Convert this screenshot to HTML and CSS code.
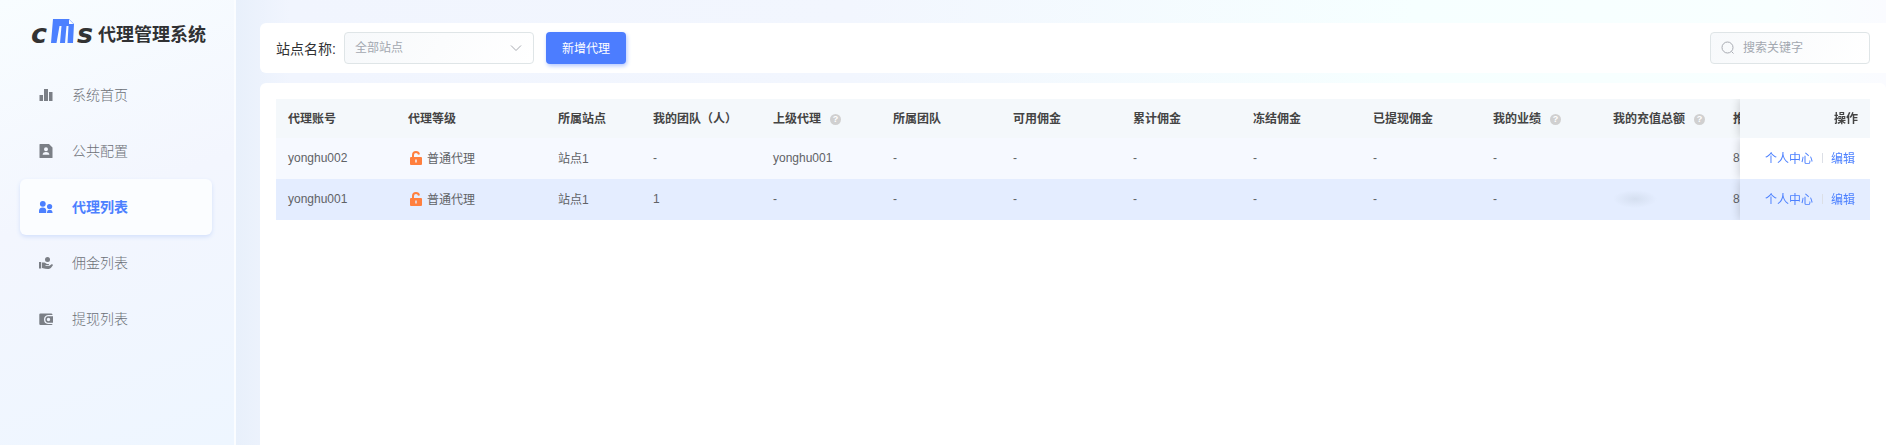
FILE: index.html
```
<!DOCTYPE html>
<html lang="zh-CN">
<head>
  <meta charset="UTF-8">
  <meta name="viewport" content="width=device-width, initial-scale=1.0">
  <title>代理管理系统</title>
  <link rel="stylesheet" href="styles.css">
</head>
<body>
  <aside class="sidebar">
    <div class="brand">
      <svg class="logo" width="66" height="40" viewBox="0 -10 66 40">
        <text x="1" y="25">c</text>
        <text x="47" y="25">s</text>
        <path fill="#4c80ff" d="M23 1H39L44 6L43 25H37.500L38.500 8H36.500L35 25H30L31.500 8H29.500L26.500 25H21Z"/>
        <path fill="#fff" d="M39 1.500V6H43.500Z"/>
      </svg>
      <h1>代理管理系统</h1>
    </div>
    <nav>
      <a href="#home">
        <svg width="14" height="14" viewBox="0 0 14 14"><path d="M.5 7H4V13H.5ZM5 1H9V13H5ZM10 4H13.500V13H10Z"/></svg>
        系统首页
      </a>
      <a href="#config">
        <svg width="14" height="14" viewBox="0 0 14 14"><path fill-rule="evenodd" d="M1 0H10L13.500 3.500V13.500Q13.500 14 13 14H1Q0.500 14 0.500 13.500V.5Q.5 0 1 0ZM7 3.200A2 2 0 0 0 7 7.200A2 2 0 0 0 7 3.200ZM3.700 10.800H10.300V10Q10 8 7 8Q4 8 3.700 10Z"/></svg>
        公共配置
      </a>
      <a href="#agents" class="active">
        <svg width="14" height="14" viewBox="0 0 14 14"><circle cx="3.800" cy="3.800" r="2.900"/><path d="M0 13V10.500Q.3 7.500 3.800 7.500Q7 7.500 7.200 10.500V13Z"/><circle cx="10.600" cy="6.500" r="2.600"/><path d="M8 13V12Q8.200 9.700 10.600 9.700Q13.200 9.700 13.500 12V13Z"/></svg>
        代理列表
      </a>
      <a href="#commission">
        <svg width="14" height="14" viewBox="0 0 14 14"><circle cx="8.500" cy="3.600" r="2.500"/><path d="M0 6H2.200V12.500H0ZM3 6.500H5.500L8 8H9.500Q10.300 8.300 10 9H6.500V9.800H10.500L12.500 8.300Q14 8 13.900 9.200Q12.500 12 10 12.900Q8 13.500 3 12Z"/></svg>
        佣金列表
      </a>
      <a href="#withdraw">
        <svg width="14" height="14" viewBox="0 0 14 14"><path fill-rule="evenodd" d="M1.500 1.500H12.500Q13.500 1.500 13.500 3H9Q5 3.500 5 7.500Q5 11.500 9 12H13.500Q13.500 13 12.500 13H1.500Q.3 13 .3 12V2.500Q.3 1.500 1.500 1.500ZM9 4.200H14V10.800H9Q6.300 10.500 6.300 7.500Q6.300 4.500 9 4.200ZM9.500 5.800A1.700 1.700 0 0 0 9.500 9.200A1.700 1.700 0 0 0 9.500 5.800Z"/></svg>
        提现列表
      </a>
    </nav>
  </aside>

  <main>
    <form class="toolbar">
      <label for="site">站点名称:</label>
      <div class="select">
        <select id="site">
          <option>全部站点</option>
          <option>站点1</option>
        </select>
        <svg width="12" height="12" viewBox="0 0 12 12"><path d="M1 3.500L6 8.500L11 3.500"/></svg>
      </div>
      <button type="button">新增代理</button>
      <label class="search">
        <svg width="14" height="14" viewBox="0 0 14 14"><circle cx="6.500" cy="6.500" r="5.500"/><path d="M10.500 10.500L12.500 12.500"/></svg>
        <input type="text" placeholder="搜索关键字" aria-label="搜索关键字">
      </label>
    </form>

    <section class="card">
      <div class="table-wrap">
        <table>
          <colgroup>
            <col class="w120"><col class="w150"><col class="w95">
            <col class="w120" span="9"><col class="w120"><col class="w130">
          </colgroup>
          <thead>
            <tr>
              <th>代理账号</th>
              <th>代理等级</th>
              <th>所属站点</th>
              <th>我的团队（人）</th>
              <th>上级代理<span class="help">?</span></th>
              <th>所属团队</th>
              <th>可用佣金</th>
              <th>累计佣金</th>
              <th>冻结佣金</th>
              <th>已提现佣金</th>
              <th>我的业绩<span class="help">?</span></th>
              <th>我的充值总额<span class="help">?</span></th>
              <th>推广</th>
              <th class="fixed">操作</th>
            </tr>
          </thead>
          <tbody>
            <tr>
              <td>yonghu002</td>
              <td>
                <span class="level">
                  <svg width="12" height="14" viewBox="0 0 12 14"><path class="shackle" d="M3 7V4Q3 1 6 1Q8.500 1 9 3.500"/><path fill-rule="evenodd" d="M1 6H11Q12 6 12 7V13Q12 14 11 14H1Q0 14 0 13V7Q0 6 1 6ZM5.300 8.500V11.500H6.700V8.500Z"/></svg>
                  普通代理
                </span>
              </td>
              <td>站点1</td>
              <td>-</td>
              <td>yonghu001</td>
              <td>-</td>
              <td>-</td>
              <td>-</td>
              <td>-</td>
              <td>-</td>
              <td>-</td>
              <td></td>
              <td>8</td>
              <td class="fixed"><div class="actions"><a href="#user">个人中心</a><a href="#edit">编辑</a></div></td>
            </tr>
            <tr class="current">
              <td>yonghu001</td>
              <td>
                <span class="level">
                  <svg width="12" height="14" viewBox="0 0 12 14"><path class="shackle" d="M3 7V4Q3 1 6 1Q8.500 1 9 3.500"/><path fill-rule="evenodd" d="M1 6H11Q12 6 12 7V13Q12 14 11 14H1Q0 14 0 13V7Q0 6 1 6ZM5.300 8.500V11.500H6.700V8.500Z"/></svg>
                  普通代理
                </span>
              </td>
              <td>站点1</td>
              <td>1</td>
              <td>-</td>
              <td>-</td>
              <td>-</td>
              <td>-</td>
              <td>-</td>
              <td>-</td>
              <td>-</td>
              <td><div class="masked"></div></td>
              <td>8</td>
              <td class="fixed"><div class="actions"><a href="#user">个人中心</a><a href="#edit">编辑</a></div></td>
            </tr>
          </tbody>
        </table>
      </div>
    </section>
  </main>
</body>
</html>
```
FILE: styles.css
```
* {
  margin: 0;
  padding: 0;
  box-sizing: border-box;
}

body {
  display: flex;
  min-height: 100vh;
  font-family: "Liberation Sans", "Noto Sans CJK SC", sans-serif;
  font-size: 12px;
  color: #606266;
  background: linear-gradient(90deg, #e8f0fb 236px, #f1f5fe 290px, #f2f6fe 45%, #f6ffff 75%, #f8ffff 94%, #fafbff);
}

a {
  text-decoration: none;
}

/* sidebar */
.sidebar {
  flex: none;
  width: 236px;
  padding: 0 22px 0 20px;
  border-right: 2px solid #fbfdff;
  background: linear-gradient(160deg, #f8fdff, #f3f6fe 45%, #eef6ff);
}

.brand {
  display: flex;
  align-items: center;
  gap: 2px;
  height: 67px;
  padding: 2px 0 0 10px;
}

.logo {
  overflow: visible;
  margin-bottom: 14px;
}

.logo text {
  font-family: "DejaVu Sans", sans-serif;
  font-size: 27px;
  font-style: italic;
  font-weight: 700;
  fill: #333;
}

.brand h1 {
  font-size: 18px;
  line-height: 24px;
  color: #303133;
  white-space: nowrap;
}

nav a {
  display: flex;
  align-items: center;
  gap: 19px;
  height: 56px;
  padding: 0 0 2px 19px;
  border-radius: 6px;
  font-size: 14px;
  font-weight: 300;
  color: #6c7077;
}

nav svg {
  margin-top: 2px;
  fill: #7b7f86;
}

nav .active {
  background: #fbfdff;
  box-shadow: 0 2px 4px #d3e0fb;
  font-weight: 700;
  color: #4c80ff;
}

nav .active svg {
  fill: #4c80ff;
}

/* toolbar */
main {
  flex: 1;
  display: flex;
  flex-direction: column;
  gap: 10px;
  min-width: 0;
  padding: 23px 0 0 24px;
}

.toolbar {
  display: flex;
  align-items: center;
  height: 50px;
  padding: 0 16px;
  border-radius: 6px 0 0 6px;
  background: #fff;
  font-size: 14px;
  color: #303133;
}

.select {
  position: relative;
  width: 190px;
  margin: 0 12px 0 8px;
}

.select select,
.search {
  width: 100%;
  height: 32px;
  border: 1px solid #dfe5e7;
  border-radius: 4px;
  background: linear-gradient(120deg, #f7f9fb, #fff);
}

.select select {
  display: block;
  padding: 0 10px;
  appearance: none;
  font-family: inherit;
  font-size: 12px;
  color: #a3a8b0;
}

.select svg {
  position: absolute;
  top: 10px;
  right: 12px;
  pointer-events: none;
}

.toolbar svg {
  flex: none;
  fill: none;
  stroke: #a8abb2;
}

.toolbar button {
  width: 80px;
  height: 32px;
  padding-bottom: 2px;
  border: none;
  border-radius: 4px;
  background: #4c7dff;
  box-shadow: 1px 2px 4px #b4c8ff;
  font-family: inherit;
  font-size: 12px;
  color: #fff;
  cursor: pointer;
}

.search {
  display: flex;
  align-items: center;
  gap: 8px;
  width: 160px;
  margin-left: auto;
  padding: 0 10px;
}

.search input {
  width: 100%;
  min-width: 0;
  border: none;
  outline: none;
  background: none;
  font-family: inherit;
  font-size: 12px;
}

.search input::placeholder {
  color: #a3a8b0;
}

/* table */
.card {
  flex: 1;
  padding: 16px;
  border-radius: 6px 6px 0 0;
  background: #fff;
}

.table-wrap {
  overflow-x: auto;
  scrollbar-width: none;
}

table {
  width: 1695px;
  table-layout: fixed;
  border-collapse: separate;
  border-spacing: 0;
}

.w95 {
  width: 95px;
}

.w120 {
  width: 120px;
}

.w130 {
  width: 130px;
}

.w150 {
  width: 150px;
}

th,
td {
  height: 41px;
  padding: 0 12px 2px;
  text-align: left;
  white-space: nowrap;
  background: #f6f9ff;
}

th {
  height: 39px;
  font-weight: 600;
  color: #444;
  background: #f4f8fb;
}

.fixed {
  position: sticky;
  right: 0;
  text-align: right;
  box-shadow: 0 0 10px rgba(0, 0, 0, 0.2);
  clip-path: inset(0 0 0 -10px);
}

td.fixed {
  background: #fff;
}

.current td {
  background: #e4edff;
}

.help {
  display: inline-block;
  width: 11px;
  height: 11px;
  margin-left: 9px;
  border-radius: 50%;
  background: #d0d0d0;
  font-size: 9px;
  font-weight: 700;
  line-height: 11px;
  text-align: center;
  vertical-align: middle;
  color: #fff;
}

.level {
  display: flex;
  align-items: center;
  gap: 5px;
  padding-left: 2px;
}

.level svg {
  fill: #ff7f3e;
}

.level .shackle {
  fill: none;
  stroke: #ff7f3e;
  stroke-width: 2;
}

.masked {
  width: 44px;
  height: 18px;
  background: radial-gradient(closest-side, #d5dff0, #e4edff);
}

.actions {
  display: flex;
  justify-content: flex-end;
  padding-right: 3px;
}

.actions a {
  color: #4c80ff;
}

.actions a + a {
  margin-left: 9px;
  padding-left: 9px;
  background: linear-gradient(#dcdfe6, #dcdfe6) left center / 1px 10px no-repeat;
}
```
